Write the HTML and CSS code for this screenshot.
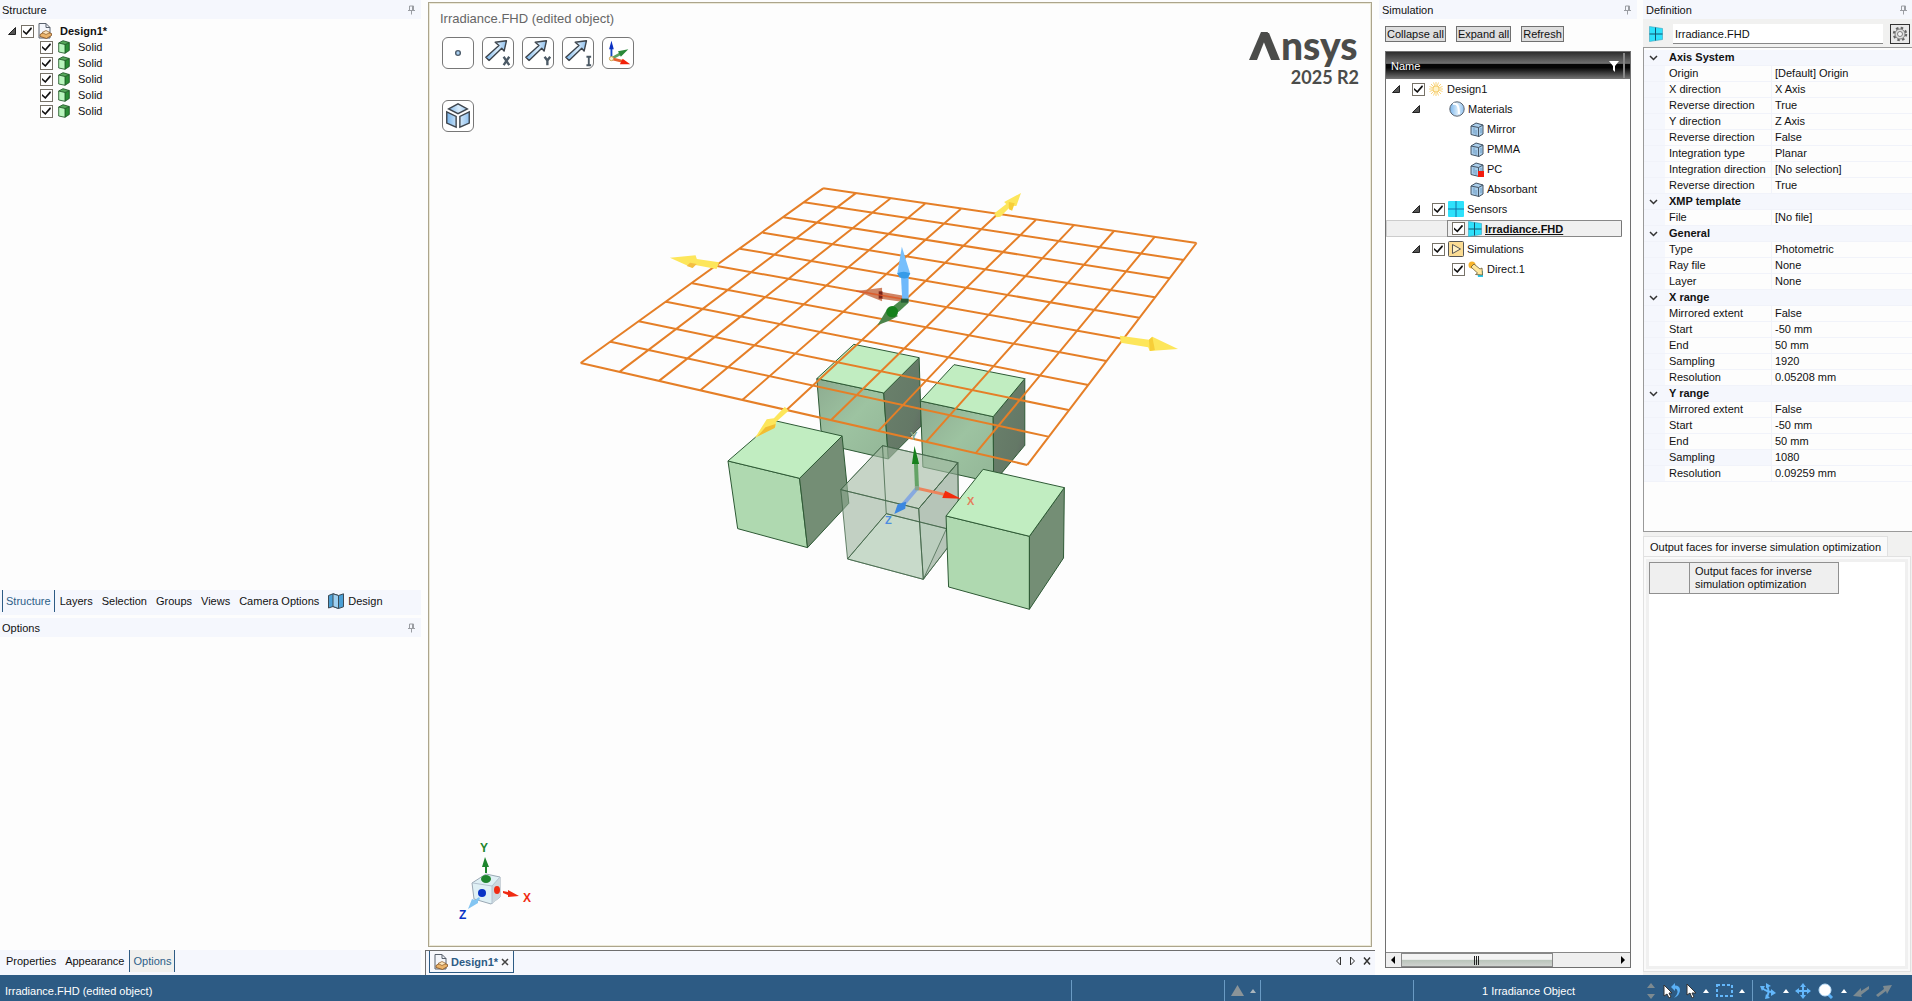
FILE: index.html
```html
<!DOCTYPE html>
<html lang="en">
<head>
<meta charset="utf-8">
<title>Irradiance.FHD</title>
<link rel="stylesheet" href="styles.css">
</head>
<body>
<svg class="defs" aria-hidden="true">
  <defs>
    <linearGradient id="steel" x1="0" x2="1" y1="0" y2="0"><stop offset="0" stop-color="#79b4ea"/><stop offset=".55" stop-color="#d9ecfb"/><stop offset="1" stop-color="#8fc0ee"/></linearGradient>
    <linearGradient id="shadeFront" x1="0" x2="1" y1="0" y2="1"><stop offset="0" stop-color="#8dab90"/><stop offset=".5" stop-color="#9dc3a1"/><stop offset="1" stop-color="#93b697"/></linearGradient>
    <linearGradient id="shadeSide" x1="0" x2="1" y1="0" y2="1"><stop offset="0" stop-color="#6b826c"/><stop offset=".7" stop-color="#647866"/><stop offset="1" stop-color="#5f6262"/></linearGradient>
    <symbol id="pin" viewBox="0 0 8 10"><path d="M2.500 1h4v4.500h-4zM5.500 1v4.500M1 5.500h7M4.500 5.500V9.500" fill="none" stroke="#9a9da3"/></symbol>
    <symbol id="twist" viewBox="0 0 8 8"><path d="M7.500 .5v7h-7z" fill="#555" stroke="#222"/></symbol>
    <symbol id="doc" viewBox="0 0 14 16"><path d="M1 .5h7l4 4V15H1z" fill="#f4f6fb" stroke="#59616c"/><path d="M8 .5v4h4" fill="none" stroke="#59616c"/><path d="M2 11.500l5-3 6.500 2v2l-5 3L2 13.500z" fill="#eab36a" stroke="#7c4a1c" stroke-width=".8"/><path d="M4 9.500l4-2 4 2-4 2z" fill="#fde4ba" stroke="#8a5a2a" stroke-width=".7"/></symbol>
    <symbol id="solid" viewBox="0 0 12 14"><path d="M.7 3L7 4.500V13.300L.7 12z" fill="#b9f5bd"/><path d="M7 4.500L11.300 2.500v8L7 13.300z" fill="#2a8c35"/><path d="M.7 3L5 .7l6.300 1.800L7 4.500z" fill="#56a85a"/><path d="M.7 3L5 .7l6.300 1.800v8L7 13.300.7 12zM.7 3L7 4.500l4.300-2M7 4.500v8.800" fill="none" stroke="#144d1c" stroke-width=".8"/></symbol>
    <symbol id="mat" viewBox="0 0 14 15"><path d="M1 4l5-3 7 2v9l-4 2.500-8-2z" fill="#a9cdea" stroke="#455565"/><path d="M1 4l7.500 1.500L13 3M8.500 5.500v9" fill="none" stroke="#455565"/><path d="M4 5.500v6M6 8v5M11 6v5" fill="none" stroke="#6f9cc4"/></symbol>
    <symbol id="sensor" viewBox="0 0 16 16"><rect width="16" height="16" rx="1" fill="#2ee1fb"/><path d="M8 0v16M0 8h16" stroke="#1173a6"/></symbol>
    <symbol id="irr" viewBox="0 0 14 16"><path d="M.5 .5l13 2v11l-13 2z" fill="#2ee1fb" stroke="#3aa3be" stroke-width=".6"/><path d="M6.500 1.500v13M.5 8h13" stroke="#12566f"/></symbol>
    <symbol id="arrow" viewBox="0 0 26 24"><path d="M2 19.500L16 7l-4-3.500L24 2l-2.500 11L19 10 5.500 23z" fill="url(#steel)" stroke="#3d444c" stroke-width="1.500" stroke-linejoin="round"/></symbol>
    <symbol id="up" viewBox="0 0 6 4"><path d="M0 4l3-4 3 4z" fill="#fff"/></symbol>
    <symbol id="chev" viewBox="0 0 9 6"><path d="M1 1l3.500 3.500L8 1" fill="none" stroke="#333" stroke-width="1.500"/></symbol>
  </defs>
</svg>

<main class="workspace">
  <aside class="left">
    <section class="pane">
      <h2 class="pane-title">Structure <svg class="pin"><use href="#pin"/></svg></h2>
      <ul class="structure">
        <li class="root"><svg class="twist"><use href="#twist"/></svg><label><input type="checkbox" checked><svg class="i-doc"><use href="#doc"/></svg><b>Design1*</b></label></li>
        <li><label><input type="checkbox" checked><svg class="i-solid"><use href="#solid"/></svg>Solid</label></li>
        <li><label><input type="checkbox" checked><svg class="i-solid"><use href="#solid"/></svg>Solid</label></li>
        <li><label><input type="checkbox" checked><svg class="i-solid"><use href="#solid"/></svg>Solid</label></li>
        <li><label><input type="checkbox" checked><svg class="i-solid"><use href="#solid"/></svg>Solid</label></li>
        <li><label><input type="checkbox" checked><svg class="i-solid"><use href="#solid"/></svg>Solid</label></li>
      </ul>
    </section>
    <nav class="tabs tabs-top">
      <button class="tab active">Structure</button><button class="tab">Layers</button><button class="tab">Selection</button><button class="tab">Groups</button><button class="tab">Views</button><button class="tab">Camera Options</button><button class="tab"><svg class="i-map" viewBox="0 0 16 16"><path d="M.5 2.500L5 .8l5.500 1.700 5-1.700v13l-5 1.700L5 13.500.5 15z" fill="#4b9fd5" stroke="#3d4a55"/><path d="M5 .8v12.700l5.500 2V2.500z" fill="#9fd0f1" stroke="#3d4a55"/></svg>Design</button>
    </nav>
    <section class="pane options">
      <h2 class="pane-title">Options <svg class="pin"><use href="#pin"/></svg></h2>
    </section>
    <nav class="tabs">
      <button class="tab">Properties</button><button class="tab">Appearance</button><button class="tab active shaded">Options</button>
    </nav>
  </aside>

  <section class="center">
    <div class="canvas">
      <div class="canvas-head">
        <div>
          <p class="caption">Irradiance.FHD (edited object)</p>
          <div class="tools">
            <button class="tool" aria-label="Origin"><svg viewBox="0 0 32 32"><circle cx="16" cy="16" r="2.500" fill="#a9d0f2" stroke="#4d5c6b" stroke-width="1.500"/></svg></button>
            <button class="tool" aria-label="X direction"><svg viewBox="0 0 32 32"><use href="#arrow" x="1" y="1" width="26" height="24"/><path d="M22 20l6 9M28 20l-6 9" stroke="#4c5a66" stroke-width="2.500"/></svg></button>
            <button class="tool" aria-label="Y direction"><svg viewBox="0 0 32 32"><use href="#arrow" x="1" y="1" width="26" height="24"/><path d="M23 20l3 4 3-4M26 24v5" fill="none" stroke="#4c5a66" stroke-width="2.500"/></svg></button>
            <button class="tool" aria-label="Integration direction"><svg viewBox="0 0 32 32"><use href="#arrow" x="1" y="1" width="26" height="24"/><path d="M25 20h5M25 29h5M27.500 20v9" stroke="#4c5a66" stroke-width="2"/></svg></button>
            <button class="tool" aria-label="Axis system"><svg viewBox="0 0 32 32"><path d="M9 22V8" stroke="#1546c4" stroke-width="2"/><path d="M6.500 12L9 3l2.500 9z" fill="#0b31c2"/><path d="M9 22l11-6" stroke="#5da161" stroke-width="3"/><path d="M16 14l11-2-8 8z" fill="#2a8838"/><path d="M9 22l12 3" stroke="#e5602f" stroke-width="3"/><path d="M18 28l3-6 8 6z" fill="#f22008"/><circle cx="9" cy="22" r="2.200" fill="#fff3cf" stroke="#c9a14e"/></svg></button>
          </div>
          <div class="tools second">
            <button class="tool" aria-label="View cube"><svg viewBox="0 0 32 32" fill="url(#steel)" stroke="#3f464e" stroke-width="1.500"><path d="M6 8.500L16 3l10 5.500L16 13.500zM4 11.500l10 5V28L4 23.500zM28 11.500l-10 5V28l10-4.500z"/></svg></button>
          </div>
        </div>
        <div class="brand">
          <svg class="wordmark" viewBox="0 0 110 42" role="img" aria-label="Ansys"><path d="M0 28L12 0h7L8 28z" fill="#4b4c4a"/><path d="M14 8l4-7h2l11 27h-9z" fill="#4b4c4a"/><text x="32" y="28">nsys</text></svg>
          <p class="release">2025 R2</p>
        </div>
      </div>

      <svg class="scene" viewBox="0 0 660 460" role="img" aria-label="Irradiance sensor over five solids">
        <g class="geo" transform="scale(.421 .3333)">
          <g class="cube">
            <path d="M610 626L769 669 780 867 674 836 620 782z" fill="url(#shadeFront)"/>
            <path d="M769 669L853 563 858 768 780 867z" fill="url(#shadeSide)"/>
            <path d="M610 626L698 523 853 563 769 669z" fill="#c1edc1"/>
            <path d="M856 693L1029 740 1030 938 862 891z" fill="url(#shadeFront)"/>
            <path d="M1029 740L1104 626V826L1030 938z" fill="url(#shadeSide)"/>
            <path d="M856 693L936 584 1104 626 1029 740z" fill="#c1edc1"/>
            <path d="M399 873L569 925 588 1133 422 1076z" fill="#afd9b0"/>
            <path d="M569 925L670 798 686 1000 588 1133z" fill="#748e75"/>
            <path d="M399 873L510 752 670 798 569 925z" fill="#c1edc1"/>
          </g>
          <g class="glass">
            <path d="M667 959L766 827 945 878 947 1090 863 1228 683 1167z" fill="#92ac94" fill-opacity=".55"/>
            <path d="M766 827L945 878 852 1016 667 959z" fill="#dbe8da" fill-opacity=".15"/>
            <path d="M683 1167L775 1031 918 1076 863 1228z" fill="#d8f2da" fill-opacity=".3"/>
            <path d="M945 878L852 1016 863 1228 947 1090z" fill="#7e8e80" fill-opacity=".16"/>
            <path d="M766 827L775 1031 683 1167M775 1031L918 1076" fill="none"/>
            <path d="M667 959L852 1016 863 1228M852 1016L945 878" fill="none"/>
          </g>
          <path d="M848 955L845 865" stroke="#64a366" stroke-width="4"/><path d="M836 882L842 828 853 882z" fill="#17801d"/>
          <path d="M848 955L915 974" stroke="#ec845c" stroke-width="3"/>
          <path d="M848 955L812 1008" stroke="#87a9df" stroke-width="4"/><path d="M802 1003L822 995 820 1016 794 1032z" fill="#3c87e0"/>
          <rect x="843" y="948" width="10" height="13" fill="#87a58c"/>
          <g class="cube">
            <path d="M917 1038L1115 1099V1318L923 1251z" fill="#afd9b0"/>
            <path d="M1115 1099L1198 953 1196 1164 1115 1318z" fill="#748e75"/>
            <path d="M917 1038L1005 898 1198 953 1115 1099z" fill="#c1edc1"/>
          </g>
          <path d="M908 984L915 962 953 986z" fill="#f32b0c"/>
          <path class="grid" d="M625 55L1512 219M580 97L1482 270M531 142L1448 325M482 188L1413 382M427 236L1376 443M373 288L1339 507M314 340L1298 573M252 395L1255 645M187 454L1208 720M120 515L1160 800M49 579L1110 885M625 55L49 579M702 70L142 605M784 86L236 632M867 101L334 660M952 117L433 690M1039 133L538 720M1130 150L644 750M1220 166L757 782M1316 183L870 815M1413 200L988 849M1512 219L1110 885"/>
          <g fill="#fde65b">
            <path d="M1032 130L1060 102 1055 96 1095 69 1084 108 1072 107 1046 140 1036 142z"/><path d="M1066 96l14 4-6 22-8-4z" fill="#f7ce38"/>
            <path d="M378 277L325 267 322 256 261 263 314 293 318 284 372 297z"/><path d="M309 278l16 4-10 12-14-6z" fill="#f4be43"/>
            <path d="M1330 497L1399 509 1407 500 1468 537 1401 543 1397 532 1332 518z"/><path d="M1399 509l8-9 6 40-12 3z" fill="#f7ce38"/>
            <path d="M534 710L508 745 491 748 463 804 512 770 513 756 543 722z"/><path d="M488 772l24-10-2 12-42 26z" fill="#f2bd32"/>
          </g>
          <path d="M820 378L765 366V353L704 363 765 394V387L820 397z" fill="#c8704a" fill-opacity=".85"/><path d="M757 364h9v22h-9z" fill="#7b2419"/><path d="M704 363L820 388" stroke="#e2592b"/>
          <path d="M810 320L828 320V393H813z" fill="#6fb9fb"/><path d="M812 230L832 312Q816 330 801 312z" fill="#77bffc"/><path d="M801 310Q816 300 832 310L827 323Q816 328 806 322z" fill="#379be8"/>
          <path d="M814 386L828 398 804 426 788 412z" fill="#4b8b4d"/><path d="M777 418L803 438 782 452 754 466z" fill="#4c844b"/><ellipse cx="789" cy="425" rx="14" ry="17" fill="#15801c"/>
          <path d="M810 386h18v12h-18z" fill="#285c37"/>
        </g>
        <g class="axis-labels"><text x="350" y="270" fill="#84a586">Y</text><text x="407" y="335" fill="#e47f5c">X</text><text x="325" y="354" fill="#4b8ce0">Z</text></g>
      </svg>

      <svg class="triad" viewBox="0 0 110 110" role="img" aria-label="View orientation">
        <path d="M32 53l14-9 14 3v20l-9 7-17-5z" fill="#dff0f5" stroke="#9aa8b4"/><path d="M52 56l8-9v20l-8 7z" fill="#ccd8de"/><path d="M33 53l19 3 8-9M52 56v18" fill="none" stroke="#b3c2d0"/>
        <ellipse cx="46" cy="49" rx="5" ry="4" fill="#1f852e"/><circle cx="42" cy="63" r="4" fill="#0833c5"/><ellipse cx="57" cy="60" rx="3" ry="4" fill="#f02b12"/>
        <path d="M45 27l4 10h-2v6h-2v-6h-3z" fill="#1f852e"/><path d="M63 61l5 1v-2l11 6-11 1v-2l-5-2z" fill="#f02b12"/><path d="M39 67l-4 3-3-1-4 10 10-6v-2l2-2z" fill="#83c5f2"/>
        <g class="axis-labels big"><text x="40" y="22" fill="#1f852e">Y</text><text x="83" y="72" fill="#f02b12">X</text><text x="19" y="89" fill="#0833c5">Z</text></g>
      </svg>
    </div>
    <nav class="doc-tabs">
      <button class="doc-tab"><svg class="i-doc"><use href="#doc"/></svg><b>Design1*</b><svg class="i-x" viewBox="0 0 8 8"><path d="M1 1l6 6M7 1L1 7" stroke="#444" stroke-width="1.500"/></svg></button>
      <span class="doc-nav">
        <button aria-label="Previous"><svg viewBox="0 0 8 10"><path d="M5.500 1v8L1.500 5z" fill="none" stroke="#333"/></svg></button>
        <button aria-label="Next"><svg viewBox="0 0 8 10"><path d="M1.500 1v8l4-4z" fill="none" stroke="#333"/></svg></button>
        <button aria-label="Close"><svg viewBox="0 0 8 10"><path d="M1 1.500l6 7M7 1.500l-6 7" stroke="#333" stroke-width="1.500"/></svg></button>
      </span>
    </nav>
  </section>

  <aside class="simulation">
    <h2 class="pane-title">Simulation <svg class="pin"><use href="#pin"/></svg></h2>
    <div class="sim-buttons"><button>Collapse all</button><button>Expand all</button><button>Refresh</button></div>
    <div class="sim-box">
      <div class="sim-head"><span>Name</span><svg viewBox="0 0 10 12"><path d="M0 1h10L6 6v6L4 10V6z" fill="#fff"/></svg><i></i></div>
      <ul class="sim-tree">
        <li class="l0"><svg class="twist"><use href="#twist"/></svg><label><input type="checkbox" checked><svg class="i16" viewBox="0 0 16 16"><path d="M8 1v14M1 8h14M3 3l10 10M13 3L3 13M5.500 1.500l5 13M10.500 1.500l-5 13M1.500 5.500l13 5M1.500 10.500l13-5" stroke="#f7cf6e" stroke-width=".9"/><circle cx="8" cy="8" r="3" fill="#fff3c8" stroke="#f5cf75"/></svg>Design1</label></li>
        <li class="l1"><svg class="twist"><use href="#twist"/></svg><span class="nocheck"></span><svg class="i16" viewBox="0 0 16 16"><circle cx="8" cy="8" r="7.200" fill="url(#steel)" stroke="#5b6470"/><path d="M4 3q6-2 6 10" fill="none" stroke="#fff" stroke-width="2"/></svg>Materials</li>
        <li class="l2 leaf"><svg class="i-mat"><use href="#mat"/></svg>Mirror</li>
        <li class="l2 leaf"><svg class="i-mat"><use href="#mat"/></svg>PMMA</li>
        <li class="l2 leaf"><svg class="i-mat" viewBox="0 0 14 15"><use href="#mat"/><path d="M8 9h6v6H8z" fill="#f31b0d"/></svg>PC</li>
        <li class="l2 leaf"><svg class="i-mat"><use href="#mat"/></svg>Absorbant</li>
        <li class="l1"><svg class="twist"><use href="#twist"/></svg><label><input type="checkbox" checked><svg class="i16"><use href="#sensor"/></svg>Sensors</label></li>
        <li class="l2 selected"><label><input type="checkbox" checked><svg class="i-irr"><use href="#irr"/></svg><b>Irradiance.FHD</b></label></li>
        <li class="l1"><svg class="twist"><use href="#twist"/></svg><label><input type="checkbox" checked><svg class="i16" viewBox="0 0 16 16"><rect x=".5" y=".5" width="15" height="15" rx="1" fill="#fbdc93" stroke="#555"/><path d="M4.500 3.500v9l8-4.500z" fill="#fff0c4" stroke="#555"/></svg>Simulations</label></li>
        <li class="l2"><label><input type="checkbox" checked><svg class="i16" viewBox="0 0 16 16"><circle cx="4" cy="4" r="3.500" fill="#f7b32b"/><path d="M9 10h6v6h-5z" fill="#27c8ee"/><path d="M3 6l3-3 6 5 2-1 .5 7-7-.5 2-1.500z" fill="#ffe79c" stroke="#6b5a35" stroke-width=".8"/></svg>Direct.1</label></li>
      </ul>
      <div class="hscroll"><svg viewBox="0 0 4 8"><path d="M4 0v8L0 4z"/></svg><span class="track"><span class="thumb"><i></i></span></span><svg viewBox="0 0 4 8"><path d="M0 0v8l4-4z"/></svg></div>
    </div>
  </aside>

  <aside class="definition">
    <h2 class="pane-title">Definition <svg class="pin"><use href="#pin"/></svg></h2>
    <div class="def-bar">
      <svg class="i-irr"><use href="#irr"/></svg>
      <input type="text" value="Irradiance.FHD" aria-label="Object name">
      <button aria-label="Settings"><svg viewBox="0 0 16 16"><circle cx="8" cy="8" r="6.200" fill="none" stroke="#666" stroke-width="2" stroke-dasharray="2.500 2.370"/><circle cx="8" cy="8" r="5" fill="#dedede" stroke="#666" stroke-width=".8"/><circle cx="8" cy="8" r="2.500" fill="#f5f5f5" stroke="#666" stroke-width=".8"/></svg></button>
    </div>
    <div class="props">
      <table>
        <colgroup><col class="c-gutter"><col class="c-name"><col></colgroup>
        <tbody>
          <tr class="cat"><td><svg><use href="#chev"/></svg></td><th colspan="2">Axis System</th></tr>
          <tr><td></td><td>Origin</td><td>[Default] Origin</td></tr>
          <tr><td></td><td>X direction</td><td>X Axis</td></tr>
          <tr><td></td><td>Reverse direction</td><td>True</td></tr>
          <tr><td></td><td>Y direction</td><td>Z Axis</td></tr>
          <tr><td></td><td>Reverse direction</td><td>False</td></tr>
          <tr><td></td><td>Integration type</td><td>Planar</td></tr>
          <tr><td></td><td>Integration direction</td><td>[No selection]</td></tr>
          <tr><td></td><td>Reverse direction</td><td>True</td></tr>
          <tr class="cat"><td><svg><use href="#chev"/></svg></td><th colspan="2">XMP template</th></tr>
          <tr><td></td><td>File</td><td>[No file]</td></tr>
          <tr class="cat"><td><svg><use href="#chev"/></svg></td><th colspan="2">General</th></tr>
          <tr><td></td><td>Type</td><td>Photometric</td></tr>
          <tr><td></td><td>Ray file</td><td>None</td></tr>
          <tr><td></td><td>Layer</td><td>None</td></tr>
          <tr class="cat"><td><svg><use href="#chev"/></svg></td><th colspan="2">X range</th></tr>
          <tr><td></td><td>Mirrored extent</td><td>False</td></tr>
          <tr><td></td><td>Start</td><td>-50 mm</td></tr>
          <tr><td></td><td>End</td><td>50 mm</td></tr>
          <tr><td></td><td>Sampling</td><td>1920</td></tr>
          <tr><td></td><td>Resolution</td><td>0.05208 mm</td></tr>
          <tr class="cat"><td><svg><use href="#chev"/></svg></td><th colspan="2">Y range</th></tr>
          <tr><td></td><td>Mirrored extent</td><td>False</td></tr>
          <tr><td></td><td>Start</td><td>-50 mm</td></tr>
          <tr><td></td><td>End</td><td>50 mm</td></tr>
          <tr class="current"><td></td><td>Sampling</td><td>1080</td></tr>
          <tr><td></td><td>Resolution</td><td>0.09259 mm</td></tr>
        </tbody>
      </table>
    </div>
    <div class="faces">
      <button class="faces-tab">Output faces for inverse simulation optimization</button>
      <div class="faces-page"><div class="faces-body">
        <table><thead><tr><th class="corner"></th><th>Output faces for inverse simulation optimization</th></tr></thead></table>
      </div></div>
    </div>
  </aside>
</main>

<footer class="status">
  <span class="s-msg">Irradiance.FHD (edited object)</span>
  <span class="s-cell s-empty"></span>
  <span class="s-cell s-warn"><svg width="13" height="11" viewBox="0 0 13 11"><path d="M6.500 0L13 11H0z" fill="#8b9498"/></svg><svg width="6" height="4" viewBox="0 0 6 4"><path d="M0 4l3-4 3 4z" fill="#aab6bd"/></svg></span>
  <span class="s-cell s-wide"></span>
  <span class="s-cell s-count">1 Irradiance Object</span>
  <span class="s-tools">
    <svg width="10" height="16" viewBox="0 0 10 16"><path d="M1 5l4-5 4 5zM1 11l4 5 4-5z" fill="#7d8a90"/></svg>
    <svg width="17" height="16" viewBox="0 0 17 16"><path d="M1 2v11l3-2 2 4 2-1-2-4h3z" fill="#fff" stroke="#333"/><path d="M8 4l4-4v2.500q5 0 5 4.500 0 5-6 8 4-4 3.500-7Q14 5.500 12 5.500V8z" fill="#5ab0f5"/></svg>
    <svg width="10" height="16" viewBox="0 0 10 16"><path d="M1 1v11l3-2 2 5 2-1-2-4h4z" fill="#fff" stroke="#333"/></svg>
    <svg class="s-up"><use href="#up"/></svg>
    <svg width="17" height="13" viewBox="0 0 17 13"><path d="M1 1h15v11H1z" fill="none" stroke="#63b7fb" stroke-width="2" stroke-dasharray="3 2"/></svg>
    <svg class="s-up"><use href="#up"/></svg>
    <span class="s-sep"></span>
    <svg width="16" height="16" viewBox="0 0 16 16"><path d="M7 3q3 5 0 11M2 5q5 4 11 4" fill="none" stroke="#63b7fb" stroke-width="2"/><path d="M6 0l5 3-5 2zM10 15l-5 1 1-5zM16 10l-5 3V6zM0 3l5 0-3 5z" fill="#63b7fb"/></svg>
    <svg class="s-up"><use href="#up"/></svg>
    <svg width="16" height="16" viewBox="0 0 16 16"><path d="M8 2v12M2 8h12" stroke="#63b7fb" stroke-width="2"/><path d="M8 0l3 4H5zM8 16l3-4H5zM0 8l4-3v6zM16 8l-4-3v6z" fill="#63b7fb"/></svg>
    <svg width="16" height="16" viewBox="0 0 16 16"><path d="M9 10l5 5" stroke="#5ab0f5" stroke-width="3"/><circle cx="7" cy="7" r="6" fill="#fff" stroke="#bfe2fd"/></svg>
    <svg class="s-up"><use href="#up"/></svg>
    <svg width="16" height="12" viewBox="0 0 16 12"><path d="M16 1L8 6V3L0 11l9 1-1-2 8-6z" fill="#7d8a90"/></svg>
    <svg width="16" height="12" viewBox="0 0 16 12"><path d="M0 10l8-6-1-3 9-1-5 9-1-3-8 6z" fill="#7d8a90"/></svg>
  </span>
</footer>
</body>
</html>
```

FILE: styles.css
```css
* { box-sizing: border-box; }
html, body { height: 100%; margin: 0; }
body {
  display: flex;
  flex-direction: column;
  background: #fdfdfd;
  color: #111;
  font: 11px/16px "Liberation Sans", Arial, sans-serif;
  overflow: hidden;
}
h2, p, ul { margin: 0; padding: 0; list-style: none; font-weight: normal; }
button { font: inherit; color: inherit; background: none; border: 0; padding: 0; }
svg { display: block; flex: none; }
.defs { position: absolute; width: 0; height: 0; }

.workspace {
  flex: 1;
  min-height: 0;
  display: grid;
  grid-template-columns: 421px minmax(0, 1fr) 258px 271px;
  column-gap: 4px;
}
.pane-title {
  display: flex;
  justify-content: space-between;
  align-items: center;
  height: 19px;
  padding: 0 6px 0 2px;
  background: #f5f7fd;
  font-size: 11px;
}
.pin { width: 8px; height: 10px; }
.twist { width: 8px; height: 8px; }

input[type="checkbox"] {
  appearance: none;
  display: grid;
  place-items: center;
  width: 13px;
  height: 13px;
  margin: 0;
  border: 1px solid #777268;
  background: #fff;
}
input[type="checkbox"]::after {
  content: "";
  width: 9px;
  height: 8px;
  background: #111;
  clip-path: polygon(0 38%, 36% 72%, 90% 0, 100% 22%, 38% 100%, 0 64%);
}
label, li { display: flex; align-items: center; }

/* left column */
.left { display: flex; flex-direction: column; min-height: 0; }
.pane { flex: 590 1 0; }
.pane.options { flex: 332 1 0; }
.structure { padding-top: 4px; }
.structure li { height: 16px; padding-left: 40px; }
.structure .root { padding-left: 8px; gap: 5px; }
.structure label { gap: 5px; }
.structure .root label { gap: 4px; }
.structure b { margin-left: 4px; }
.i-doc { width: 14px; height: 16px; }
.i-solid { width: 12px; height: 14px; margin-right: 3px; }
.tabs { display: flex; height: 25px; background: #f5f7fd; }
.tabs-top { margin-bottom: 3px; }
.tab { display: flex; align-items: center; gap: 4px; height: 22px; padding: 0 4px; border: 0 solid #2d5b84; margin-left: 1px; }
.tabs .tab:first-child { margin-left: 2px; }
.tab.active { border-width: 0 1px; color: #2d6088; padding: 0 3px; }
.tab.shaded { background: #f0f0ee; }
.i-map { width: 16px; height: 16px; }

/* viewport */
.center { display: flex; flex-direction: column; min-height: 0; min-width: 0; }
.canvas {
  position: relative;
  flex: 1;
  margin: 2px 3px 3px 3px;
  border: 1px solid #aca58c;
  box-shadow: inset 0 0 0 1px #ece9d8;
}
.canvas-head { display: flex; justify-content: space-between; padding: 8px 12px 0 11px; }
.caption { font-size: 13px; line-height: 16px; color: #666; }
.tools { display: flex; gap: 8px; padding: 10px 0 0 2px; }
.tools.second { padding-top: 31px; }
.tool { width: 32px; height: 32px; border: 1px solid #777; border-radius: 6px; background: #fff; }
.tool svg { width: 30px; height: 30px; }
.brand { padding-top: 21px; }
.wordmark { width: 110px; height: 42px; overflow: visible; }
.wordmark text { font: 900 39px Lato, sans-serif; fill: #4b4c4a; }
.release { margin-top: -6px; font: bold 18px/18px Lato, sans-serif; color: #4b4c4a; text-align: right; }
.scene { position: absolute; left: 131px; top: 167px; width: 660px; height: 460px; }
.geo * { vector-effect: non-scaling-stroke; }
.cube path { stroke: #2e5a35; stroke-width: 1; }
.glass path { stroke: #44664a; stroke-width: 1; stroke-opacity: .8; }
.grid { fill: none; stroke: #e57f27; stroke-width: 2; }
.axis-labels text { font: bold 11px "Liberation Sans", Arial, sans-serif; }
.axis-labels.big text { font-size: 12px; }
.triad { position: absolute; left: 11px; bottom: 6px; width: 110px; height: 110px; }

.doc-tabs {
  display: flex;
  justify-content: space-between;
  align-items: flex-start;
  height: 25px;
  padding: 0 4px 0 3px;
  border: solid #6e6e6e;
  border-width: 1px 0 0 1px;
  background: #f5f7fd;
}
.doc-tab { display: flex; align-items: center; gap: 3px; height: 22px; padding: 0 4px; border: 1px solid #2d5b84; border-top: 0; color: #2d5b84; background: #f8f9fd; }
.i-x { width: 8px; height: 8px; }
.doc-nav { display: flex; gap: 6px; padding-top: 5px; }
.doc-nav svg { width: 8px; height: 10px; }

/* simulation */
.simulation { display: flex; flex-direction: column; min-height: 0; }
.simulation .pane-title { padding-left: 3px; }
.sim-buttons { display: flex; gap: 10px; padding: 7px 6px 9px; }
.sim-buttons button { height: 16px; padding: 0 1px; line-height: 14px; border: 1px solid #707070; background: #dedede; }
.sim-box { flex: 1; display: flex; flex-direction: column; margin: 0 6px 7px; border: 1px solid #707070; background: #fff; }
.sim-head {
  display: flex;
  align-items: center;
  height: 27px;
  padding-left: 5px;
  color: #fff;
  background: linear-gradient(#2d2d2d, #6f6f6f 42%, #050505 46%, #050505 58%, #777);
}
.sim-head span { flex: 1; }
.sim-head svg { width: 10px; height: 12px; }
.sim-head i { width: 7px; height: 25px; margin-left: 4px; border: solid #888; border-width: 0 0 0 2px; }
.sim-tree { flex: 1; }
.sim-tree li { height: 20px; gap: 12px; }
.sim-tree label { gap: 3px; }
.sim-tree .l0 { padding-left: 6px; }
.sim-tree .l1 { padding-left: 26px; }
.sim-tree .l2 { padding-left: 66px; }
.sim-tree .leaf { padding-left: 84px; gap: 3px; }
.sim-tree .nocheck { width: 5px; }
.sim-tree .nocheck + .i16 { margin-right: -9px; }
.sim-tree .selected { height: 17px; margin: 1px 8px 2px 0; padding: 0; border: 1px solid #ccc; border-right-color: #777; background: #f0f0f0; }
.sim-tree .selected label { flex: 1; height: 17px; margin-left: 60px; padding-left: 4px; border: 1px solid #888; border-right: 0; }
.selected b { text-decoration: underline; }
.i16 { width: 16px; height: 16px; }
.i-mat { width: 14px; height: 15px; }
.i-irr { width: 14px; height: 16px; }
.hscroll { display: flex; align-items: center; gap: 6px; height: 15px; padding: 0 5px; border-top: 1px solid #888; background: #efefef; }
.hscroll svg { width: 4px; height: 8px; }
.track { flex: 1; height: 100%; }
.thumb { display: grid; place-items: center; width: 71%; height: 100%; border: 1px solid #888; background: linear-gradient(#f3f3f3 45%, #b9c4ba 50%, #cfd2cf); }
.thumb i { width: 5px; height: 9px; background: repeating-linear-gradient(90deg, #222 0 1px, transparent 1px 2px); }

/* definition */
.definition { display: flex; flex-direction: column; min-height: 0; background: #f1f1f0; padding-bottom: 3px; margin-left: 2px; }
.definition .pane-title { padding: 0 5px 0 3px; }
.def-bar { display: flex; align-items: center; gap: 10px; height: 28px; padding: 2px 2px 0 6px; }
.def-bar input { flex: 1; min-width: 0; height: 20px; padding: 0 2px; border: 0; border-bottom: 1px solid #888; background: #fff; font: inherit; color: inherit; }
.def-bar button { display: grid; place-items: center; width: 20px; height: 20px; margin-left: -3px; border: 1px solid #333; background: #e9e9e9; }
.def-bar button svg { width: 16px; height: 16px; }
.props { height: 485px; border: solid #9a9a9a; border-width: 1px 0 1px 1px; background: #fdfdfd; padding-top: 2px; }
.props table { width: 100%; table-layout: fixed; border-spacing: 0; }
.c-gutter { width: 21px; }
.c-name { width: 107px; }
.props td, .props th { height: 16px; padding: 0 4px; line-height: 15px; border-bottom: 1px solid #f1f3fa; text-align: left; white-space: nowrap; }
.props td:nth-child(2) { border-right: 1px solid #f1f3fa; }
.props td:nth-child(3) { padding-left: 3px; }
.props td:first-child, .cat th, .current td:nth-child(2) { background: #f5f7fd; }
.cat svg { width: 9px; height: 6px; margin-left: 1px; }
.faces { flex: 1; display: flex; flex-direction: column; align-items: flex-start; margin-top: 4px; }
.faces-tab { height: 20px; padding: 0 6px; border: 1px solid #e1e1e1; border-bottom: 0; background: #fafafa; white-space: nowrap; }
.faces-page { flex: 1; display: flex; align-self: stretch; border: 1px solid #e1e1e1; background: #fafafa; padding: 2px; margin-right: 1px; }
.faces-body { flex: 1; border: 3px solid #f0f0f0; background: #fff; }
.faces table { width: 190px; border-collapse: collapse; }
.faces th { height: 31px; padding: 2px 5px; border: 1px solid #909090; background: #efefef; font-weight: normal; text-align: left; line-height: 13px; }
.faces .corner { width: 40px; }

/* status bar */
.status { display: flex; align-items: center; height: 26px; padding: 5px 20px 0 5px; background: #2d5b84; color: #fff; }
.s-msg { flex: 1; }
.s-cell { display: flex; align-items: center; align-self: stretch; border-left: 1px solid #6a9bc4; }
.s-empty { width: 153px; }
.s-warn { width: 36px; gap: 6px; padding-left: 6px; }
.s-wide { width: 153px; }
.s-count { width: 233px; padding-left: 68px; }
.s-tools { display: flex; align-items: center; justify-content: space-between; align-self: stretch; width: 246px; }
.s-up { width: 6px; height: 4px; }
.s-sep { width: 1px; align-self: stretch; background: #6a9bc4; }
```
